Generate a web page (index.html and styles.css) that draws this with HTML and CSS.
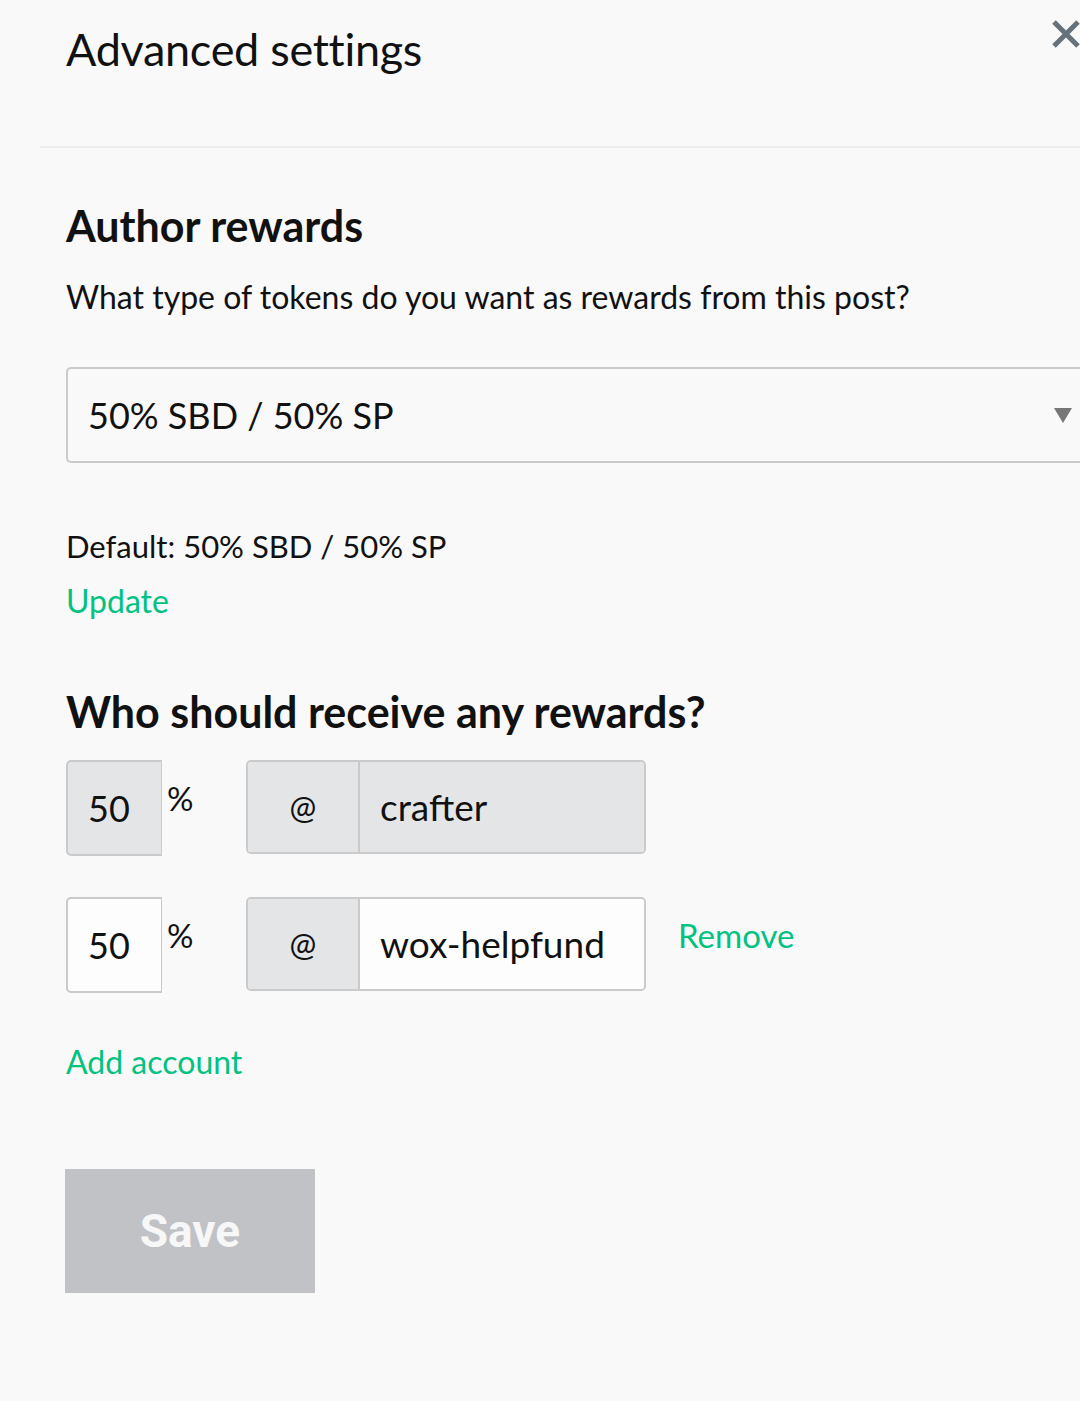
FILE: index.html
```html
<!DOCTYPE html>
<html>
<head>
<meta charset="utf-8">
<link rel="stylesheet" href="styles.css">
</head>
<body>
<div class="modal">
  <div class="header">
    <h1 class="title">Advanced settings</h1>
    <button class="close" aria-label="Close">
      <svg width="30" height="30" viewBox="0 0 30 30"><path d="M3 3 L27 27 M27 3 L3 27" stroke="#66727b" stroke-width="5" fill="none"/></svg>
    </button>
  </div>
  <div class="content">
    <h2 class="section">Author rewards</h2>
    <p class="question">What type of tokens do you want as rewards from this post?</p>
    <div class="select">
      <span class="select-value">50% SBD / 50% SP</span>
      <span class="arrow"></span>
    </div>
    <p class="default">Default: 50% SBD / 50% SP</p>
    <a class="link update">Update</a>
    <h2 class="section who">Who should receive any rewards?</h2>
    <div class="row">
      <div class="pct disabled">50</div>
      <span class="pct-sign">%</span>
      <div class="acct">
        <span class="at">@</span>
        <span class="name disabled">crafter</span>
      </div>
    </div>
    <div class="row">
      <div class="pct">50</div>
      <span class="pct-sign">%</span>
      <div class="acct">
        <span class="at">@</span>
        <span class="name">wox-helpfund</span>
      </div>
      <a class="link remove">Remove</a>
    </div>
    <a class="link add">Add account</a>
    <button class="save">Save</button>
  </div>
</div>
</body>
</html>
```
FILE: styles.css
```css
html, body {
  margin: 0;
  padding: 0;
  background: #f9f9f9;
  overflow: hidden;
}
body {
  font-family: "Lato", "Open Sans", sans-serif;
  color: #111;
  width: 1080px;
  height: 1401px;
}
.modal {
  position: relative;
}
.header {
  margin-left: 40px;
  padding-left: 26px;
  height: 146px;
  border-bottom: 2px solid #ececec;
}
.title {
  margin: 0;
  padding-top: 21px;
  font-weight: 400;
  font-size: 45px;
  line-height: 56px;
  letter-spacing: -0.3px;
}
.close {
  position: absolute;
  top: 19px;
  right: -4px;
  padding: 0;
  border: 0;
  background: none;
  width: 36px;
  height: 32px;
}
.content {
  padding-left: 66px;
}
.section {
  margin: 0;
  font-weight: 700;
  font-size: 43px;
  line-height: 48px;
}
.section:first-child {
  padding-top: 54px;
}
.question {
  margin: 27px 0 0;
  font-size: 32px;
  line-height: 40px;
}
.select {
  box-sizing: border-box;
  margin-top: 50px;
  height: 96px;
  border: 2px solid #cbcbcb;
  border-right: 0;
  border-radius: 5px 0 0 5px;
  background: #f9f9f9;
  display: flex;
  align-items: center;
  padding-left: 20px;
  padding-right: 8px;
}
.select-value {
  flex: 1;
  font-size: 36px;
}
.arrow {
  width: 0;
  height: 0;
  border-left: 9px solid transparent;
  border-right: 9px solid transparent;
  border-top: 15px solid #777;
}
.default {
  margin: 63px 0 0;
  font-size: 31px;
  line-height: 40px;
}
.link {
  display: block;
  color: #00c281;
  font-size: 32px;
  line-height: 40px;
}
.update {
  margin-top: 15px;
}
.who {
  margin-top: 67px;
}
.row {
  display: flex;
  align-items: flex-start;
  margin-top: 24px;
}
.row + .row {
  margin-top: 41px;
}
.pct {
  box-sizing: border-box;
  width: 96px;
  height: 96px;
  border: 2px solid #cacaca;
  border-right-width: 1px;
  border-radius: 5px 0 0 5px;
  background: #fdfdfd;
  font-size: 36px;
  line-height: 92px;
  padding-left: 20px;
}
.pct.disabled {
  background: #e4e5e7;
}
.pct-sign {
  width: 84px;
  font-size: 33px;
  line-height: 33px;
  padding-left: 5px;
  padding-top: 22px;
  box-sizing: border-box;
}
.acct {
  box-sizing: border-box;
  display: flex;
  width: 400px;
  height: 94px;
  border: 2px solid #cacaca;
  border-radius: 5px;
  overflow: hidden;
}
.at {
  width: 110px;
  background: #e4e5e7;
  border-right: 2px solid #cacaca;
  font-size: 32px;
  line-height: 90px;
  text-align: center;
}
.name {
  flex: 1;
  background: #fdfdfd;
  font-size: 37px;
  line-height: 90px;
  padding-left: 20px;
}
.name.disabled {
  background: #e4e5e7;
}
.remove {
  margin-left: 32px;
  margin-top: 18px;
  font-size: 33px;
}
.add {
  margin-top: 49px;
}
.save {
  display: block;
  margin-top: 87px;
  margin-left: -1px;
  width: 250px;
  height: 124px;
  border: 0;
  border-radius: 0;
  background: #c0c2c6;
  color: #f7f7f8;
  font-family: "Roboto", "Liberation Sans", sans-serif;
  font-weight: 700;
  font-size: 46px;
  padding: 0;
}
```
